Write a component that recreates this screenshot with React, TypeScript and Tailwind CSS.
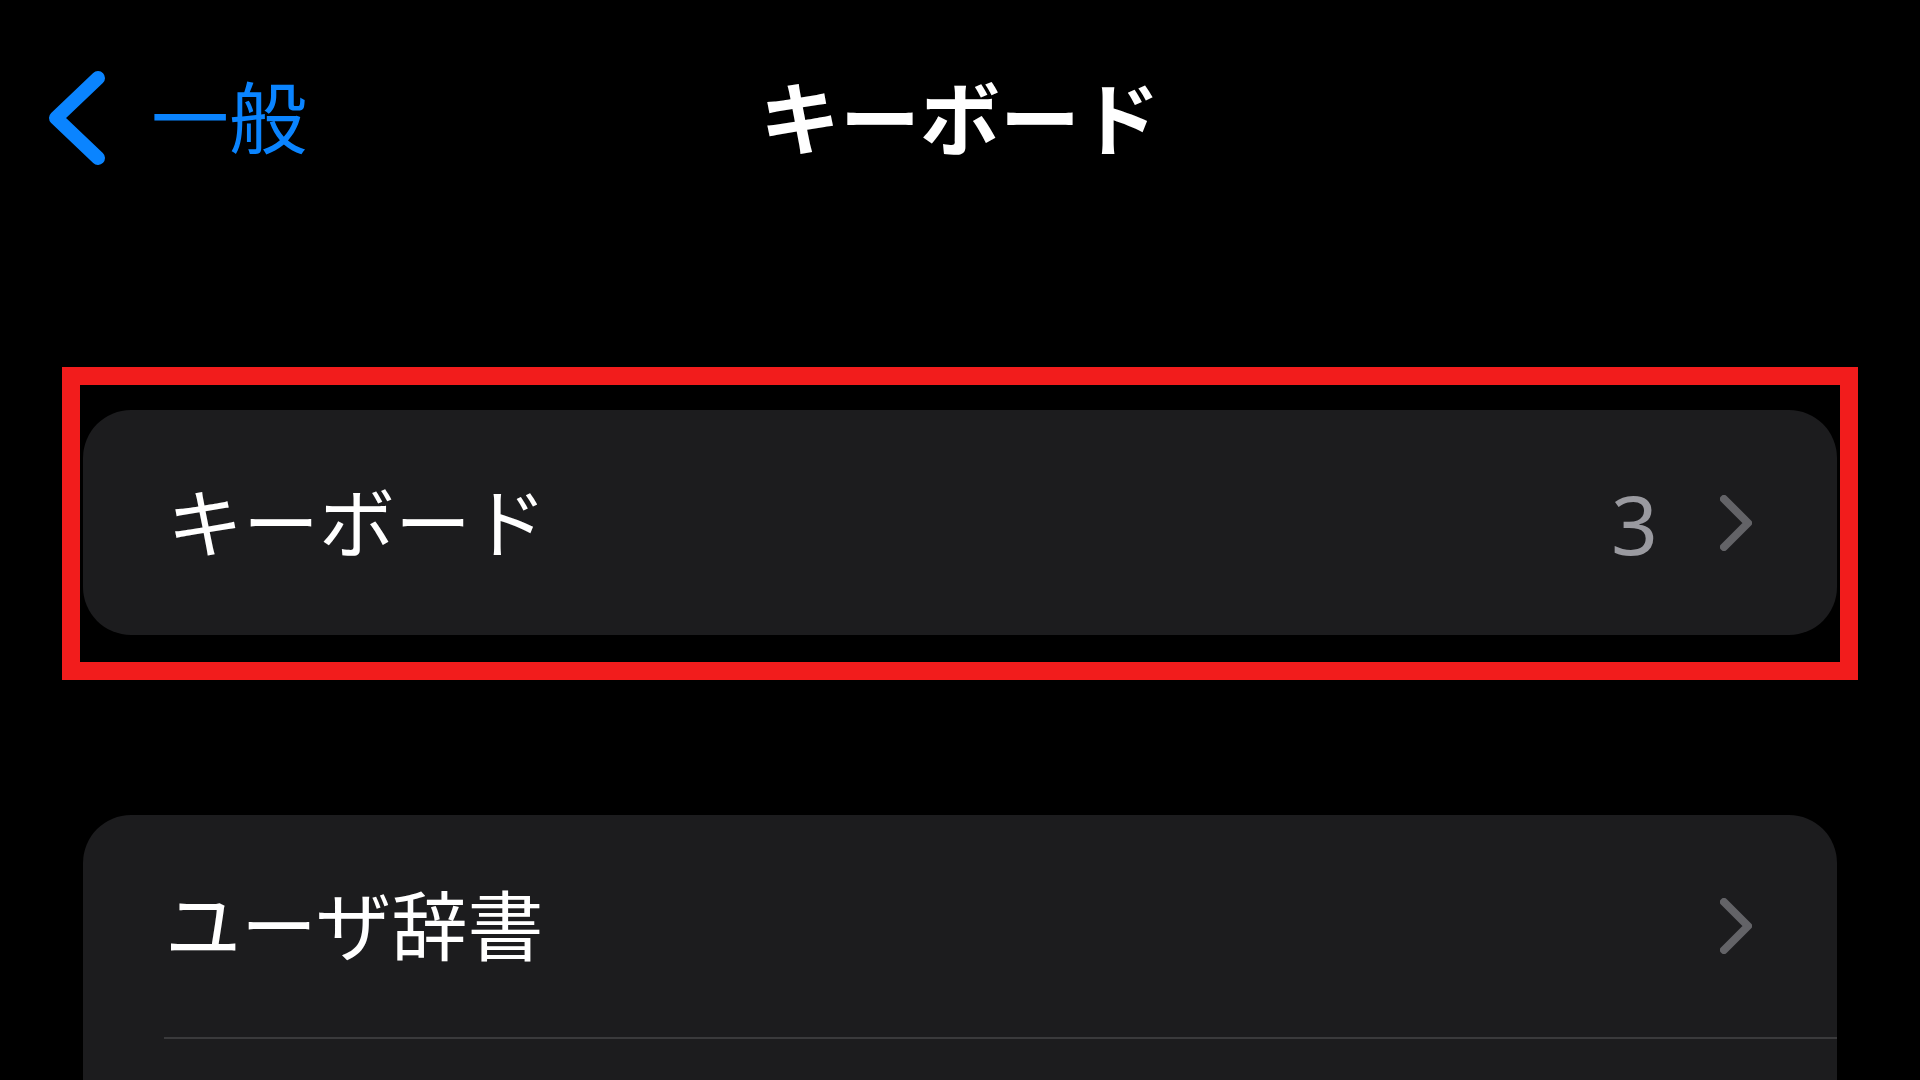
import React from "react";

const BackChevron = () => (
  <svg width="56" height="94" viewBox="0 0 56 94" fill="none">
    <polyline points="49,7 7,47 49,87" stroke="#0a84ff" strokeWidth="14" strokeLinecap="round" strokeLinejoin="round" />
  </svg>
);

const RowChevron = () => (
  <svg width="32" height="56" viewBox="0 0 32 56" fill="none">
    <polyline points="4,4 28,28 4,52" stroke="#636367" strokeWidth="8" strokeLinecap="round" strokeLinejoin="round" />
  </svg>
);

const App = () => {
  return (
    <div
      className="h-screen overflow-hidden bg-black text-white"
      style={{ fontFamily: '"Noto Sans", "Noto Sans CJK JP", sans-serif' }}
    >
      {/* ナビゲーションバー */}
      <header className="grid h-[236px] grid-cols-[1fr_auto_1fr] items-center">
        <div className="flex items-center pl-[49px]">
          <BackChevron />
          <span className="ml-[46px] text-[78px] leading-none text-[#0a84ff]">一般</span>
        </div>
        <h1 className="text-[80px] font-bold leading-none">キーボード</h1>
        <div />
      </header>

      <main className="px-[83px] pt-[131px]">
        {/* 赤枠で囲まれた項目 */}
        <div className="-mx-[21px] border-[18px] border-[#f21c1c] px-[3px] pt-[25px] pb-[27px]">
          <div className="flex h-[225px] items-center rounded-[48px] bg-[#1c1c1e] pl-[84px] pr-[85px]">
            <span className="flex-1 text-[76px] leading-none">キーボード</span>
            <span className="mr-[62px] text-[82px] leading-none text-[#9a9aa0]">3</span>
            <RowChevron />
          </div>
        </div>

        <div className="mt-[135px] rounded-t-[48px] bg-[#1c1c1e]">
          <div className="flex h-[222px] items-center pl-[82px] pr-[85px]">
            <span className="flex-1 text-[76px] leading-none">ユーザ辞書</span>
            <RowChevron />
          </div>
          <div className="ml-[81px] h-[2px] bg-[#3a3a3c]" />
          <div className="h-[222px]" />
        </div>
      </main>
    </div>
  );
};

export default App;
